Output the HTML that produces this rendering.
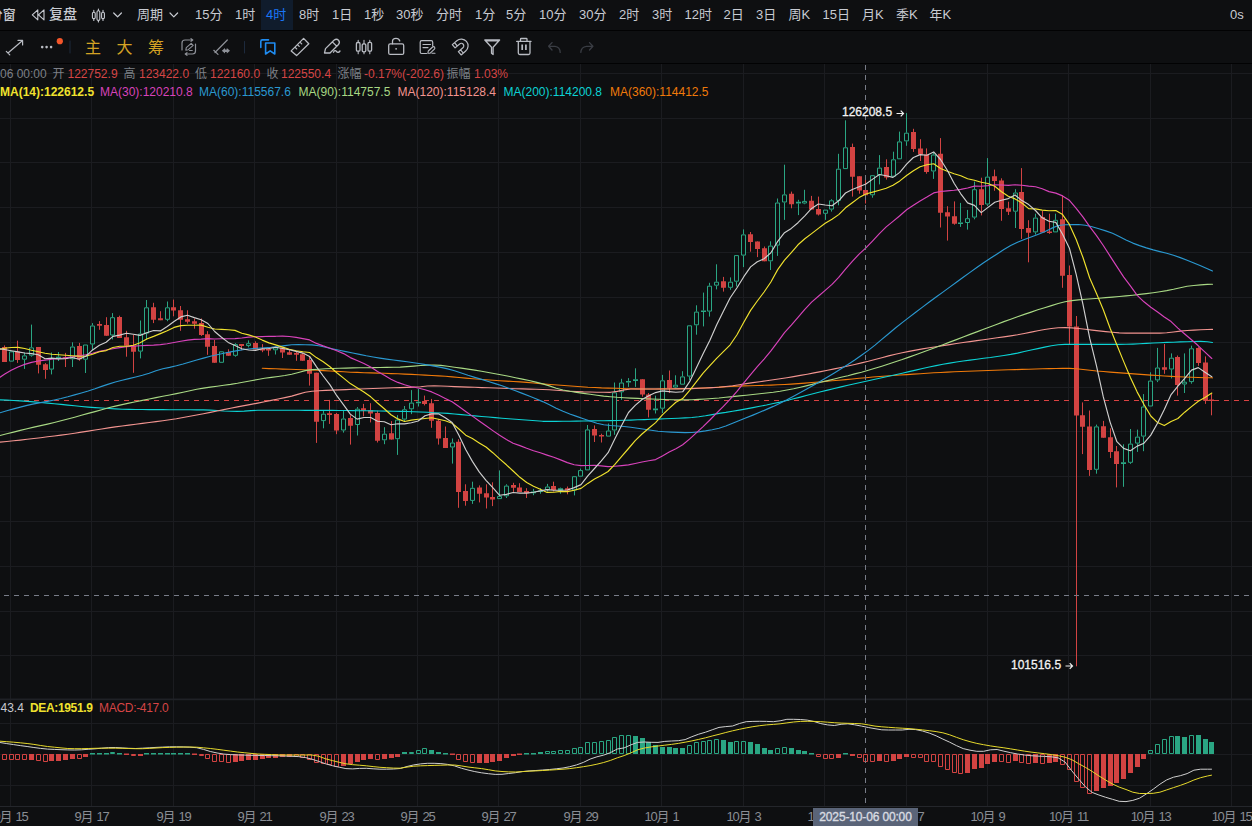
<!DOCTYPE html><html><head><meta charset="utf-8"><title>chart</title><style>
html,body{margin:0;padding:0;background:#0e0f11}
body{width:1252px;height:826px;overflow:hidden;position:relative;font-family:"Liberation Sans","Noto Sans CJK SC",sans-serif;color:#c8cbd2}
.t{position:absolute;white-space:nowrap;line-height:1}
.top{font-size:13px;top:7.5px;color:#c8cbd2}
.lg{font-size:12px;top:68px;color:#7d8087}
.lg b{font-weight:normal;color:#d64545}
.ma{font-size:12px;top:86px}
.ax{font-size:13px;top:810px;color:#8a8d94;transform:translateX(-50%);letter-spacing:-1.3px;word-spacing:2px}
.bar{position:absolute;left:0;width:1252px;background:#0e0f11}

</style></head><body>
<svg width="1252" height="826" viewBox="0 0 1252 826" style="position:absolute;left:0;top:0"><path d="M10.5 64V806 M91.5 64V806 M173.5 64V806 M254.5 64V806 M336.5 64V806 M417.5 64V806 M498.5 64V806 M580.5 64V806 M661.5 64V806 M743.5 64V806 M824.5 64V806 M906.5 64V806 M987.5 64V806 M1068.5 64V806 M1150.5 64V806 M1231.5 64V806 M0 73.5H1252 M0 118.5H1252 M0 162.5H1252 M0 207.5H1252 M0 252.5H1252 M0 297.5H1252 M0 342.5H1252 M0 387.5H1252 M0 431.5H1252 M0 476.5H1252 M0 521.5H1252 M0 566.5H1252 M0 611.5H1252 M0 655.5H1252 M0 723.5H1252 M0 754.5H1252 M0 785.5H1252" stroke="#1b1c20" stroke-width="1" fill="none"/><path d="M0 699.3H1252" stroke="#1f2126" stroke-width="1.7" fill="none"/><path d="M0 806.5H1252" stroke="#24262b" stroke-width="1"/><path d="M-6 400.5H1252" stroke="#d94242" stroke-width="1" stroke-dasharray="5 5" fill="none"/><path d="M24.5 352.5V355.4 M24.5 359.7V368.9 M31.5 324.6V347.4 M31.5 355.7V356.7 M51.5 352.5V358 M51.5 369.6V374.4 M58.5 352V356.7 M58.5 358.3V361 M72.5 342.3V346.5 M72.5 359.3V367 M85.5 359.7V373 M92.5 323.1V325.5 M92.5 344.5V350.3 M112.5 313.1V317.2 M112.5 335.5V339.4 M140.5 320.5V333.6 M140.5 351.6V358.4 M146.5 300V307.3 M146.5 333.6V339.4 M167.5 301.5V307.3 M167.5 319.8V321.2 M235.5 343.2V344.1 M235.5 355.8V356.7 M248.5 340.4V343.2 M248.5 346.1V347.4 M275.5 350.3V354.5 M323.5 410.2V413.7 M323.5 421.1V428.3 M343.5 410.8V418.5 M343.5 430.5V432.6 M357.5 407.1V408.7 M357.5 425V435.5 M384.5 427.2V433.7 M384.5 440.3V444.2 M397.5 415.2V419.6 M397.5 439.2V454.9 M404.5 406V409.3 M404.5 419.6V421.1 M411.5 390.1V402.6 M411.5 409.3V414.1 M418.5 389V401.7 M418.5 403.3V406.5 M452.5 438.5V442.5 M452.5 447.5V463.6 M472.5 481.7V487.8 M472.5 500.9V503.9 M499.5 470.4V495.9 M506.5 484.3V485.6 M506.5 496.3V498 M533.5 488.9V491.5 M533.5 493.2V495.2 M540.5 488.2V490.4 M540.5 492V493.7 M547.5 483.9V486.5 M547.5 490V491.5 M560.5 487.6V488.2 M560.5 490.4V493.7 M574.5 490.4V495.4 M580.5 468.6V470.1 M587.5 425V429.4 M608.5 423.5V430.5 M614.5 382.5V392.3 M614.5 430.5V434.8 M621.5 378.8V382.5 M621.5 392.3V399.9 M628.5 378.1V380.9 M628.5 382.5V386.9 M635.5 368.3V379.2 M635.5 381V386.9 M655.5 395.6V408.6 M655.5 410.2V413.5 M662.5 374.9V380.3 M662.5 408.7V413 M675.5 375.3V384.7 M675.5 387.5V388.4 M682.5 371.2V376.4 M689.5 376.6V380.1 M696.5 305.3V311.6 M696.5 325.3V334.7 M703.5 292.6V310.4 M703.5 312V326.4 M709.5 282.8V285.7 M709.5 311.6V316.6 M716.5 264.3V281.7 M716.5 285.7V289.4 M730.5 277.4V281.7 M730.5 287.8V289.8 M736.5 281.7V286.5 M743.5 229.4V234.4 M743.5 255.6V267.1 M770.5 241.3V245.6 M770.5 261.3V270 M777.5 198.5V202.5 M777.5 245.6V255.9 M784.5 164.7V194.4 M784.5 202.5V219.9 M798.5 199.8V201.8 M798.5 203.5V215.1 M804.5 189.8V200.9 M804.5 203.5V204.2 M825.5 213.8V219.9 M831.5 199.2V200.3 M831.5 209.6V211.6 M838.5 153.8V168.7 M838.5 200.9V205.3 M845.5 120.3V147.3 M872.5 195.3V197.7 M879.5 155.1V167.6 M879.5 175.2V184.4 M893.5 151.7V159.3 M899.5 131.6V141.4 M906.5 113.1V132.7 M906.5 141.4V145.8 M933.5 152.3V154.5 M933.5 171.5V178.9 M960.5 202.9V222.4 M960.5 224V226.9 M967.5 209.9V218.2 M967.5 223V229.6 M974.5 181.6V189.2 M974.5 217.6V219.3 M987.5 158.1V176.6 M987.5 204.5V206 M1015.5 189.2V192.5 M1015.5 211.7V228 M1035.5 213.7V217.6 M1035.5 232.4V234.6 M1055.5 213.7V219.8 M1096.5 424.6V426.4 M1096.5 469.8V473.7 M1123.5 444.3V462.3 M1123.5 463.9V486.8 M1130.5 429V443.6 M1130.5 462.8V463.9 M1137.5 429.6V436.6 M1137.5 443.6V451.9 M1143.5 394.1V406.5 M1143.5 436.6V451.2 M1150.5 372.3V380.6 M1157.5 347.9V367.5 M1157.5 380.4V382.1 M1171.5 353.4V357.7 M1171.5 369.5V378.4 M1184.5 353.4V381.7 M1184.5 384.5V393 M1191.5 345.7V348.3 M1191.5 382.1V383.7" stroke="#2aa683" stroke-width="1" fill="none"/><path d="M9.5 351.8H13.5V361.1H9.5Z M22.5 355.9H26.5V359.2H22.5Z M29.5 347.9H33.5V355.2H29.5Z M49.5 358.5H53.5V369.1H49.5Z M70.5 347H74.5V358.8H70.5Z M83.5 345H87.5V359.2H83.5Z M90.5 326H94.5V344H90.5Z M110.5 317.7H114.5V335H110.5Z M138.5 334.1H142.5V351.1H138.5Z M144.5 307.8H148.5V333.1H144.5Z M165.5 307.8H169.5V319.3H165.5Z M219.5 351.8H223.5V362.3H219.5Z M233.5 344.6H237.5V355.3H233.5Z M246.5 343.7H250.5V345.6H246.5Z M273.5 347.9H277.5V349.8H273.5Z M321.5 414.2H325.5V420.6H321.5Z M341.5 419H345.5V430H341.5Z M355.5 409.2H359.5V424.5H355.5Z M382.5 434.2H386.5V439.8H382.5Z M395.5 420.1H399.5V438.7H395.5Z M402.5 409.8H406.5V419.1H402.5Z M409.5 403.1H413.5V408.8H409.5Z M450.5 443H454.5V447H450.5Z M470.5 488.3H474.5V500.4H470.5Z M497.5 496.4H501.5V498.6H497.5Z M504.5 486.1H508.5V495.8H504.5Z M545.5 487H549.5V489.5H545.5Z M572.5 476.7H576.5V489.9H572.5Z M578.5 470.6H582.5V476.2H578.5Z M585.5 429.9H589.5V469.9H585.5Z M606.5 431H610.5V436.1H606.5Z M612.5 392.8H616.5V430H612.5Z M619.5 383H623.5V391.8H619.5Z M660.5 380.8H664.5V408.2H660.5Z M673.5 385.2H677.5V387H673.5Z M680.5 376.9H684.5V384.2H680.5Z M687.5 325.8H691.5V376.1H687.5Z M694.5 312.1H698.5V324.8H694.5Z M707.5 286.2H711.5V311.1H707.5Z M714.5 282.2H718.5V285.2H714.5Z M728.5 282.2H732.5V287.3H728.5Z M734.5 255.6H738.5V281.2H734.5Z M741.5 234.9H745.5V255.1H741.5Z M768.5 246.1H772.5V260.8H768.5Z M775.5 203H779.5V245.1H775.5Z M782.5 194.9H786.5V202H782.5Z M802.5 201.4H806.5V203H802.5Z M823.5 210.1H827.5V213.3H823.5Z M829.5 200.8H833.5V209.1H829.5Z M836.5 169.2H840.5V200.4H836.5Z M843.5 147.8H847.5V168.6H843.5Z M870.5 175.7H874.5V194.8H870.5Z M877.5 168.1H881.5V174.7H877.5Z M891.5 159.8H895.5V176.2H891.5Z M897.5 141.9H901.5V158.8H897.5Z M904.5 133.2H908.5V140.9H904.5Z M931.5 155H935.5V171H931.5Z M965.5 218.7H969.5V222.5H965.5Z M972.5 189.7H976.5V217.1H972.5Z M985.5 177.1H989.5V204H985.5Z M1013.5 193H1017.5V211.2H1013.5Z M1033.5 218.1H1037.5V231.9H1033.5Z M1053.5 220.3H1057.5V231.9H1053.5Z M1094.5 426.9H1098.5V469.3H1094.5Z M1128.5 444.1H1132.5V462.3H1128.5Z M1135.5 437.1H1139.5V443.1H1135.5Z M1141.5 407H1145.5V436.1H1141.5Z M1148.5 381.1H1152.5V406H1148.5Z M1155.5 368H1159.5V379.9H1155.5Z M1169.5 358.2H1173.5V369H1169.5Z M1182.5 382.2H1186.5V384H1182.5Z M1189.5 348.8H1193.5V381.6H1189.5Z" stroke="#2aa683" stroke-width="1" fill="#0e0f11"/><path d="M56 356.7H61V358.3H56Z M416 401.7H421V403.3H416Z M531 491.5H536V493.2H531Z M538 490.4H543V492H538Z M558 488.2H563V490.4H558Z M626 380.9H631V382.5H626Z M633 379.2H638V381H633Z M653 408.6H658V410.2H653Z M701 310.4H706V312H701Z M796 201.8H801V203.5H796Z M958 222.4H963V224H958Z M1121 462.3H1126V463.9H1121Z" fill="#2aa683"/><path d="M4.5 345.4V361.9 M17.5 340.7V362.9 M38.5 347.1V373.4 M45.5 363.1V378.8 M65.5 352.9V367 M79.5 342.9V360.8 M99.5 321.1V329.8 M106.5 317.2V335.8 M119.5 315.7V337.9 M126.5 330.8V356.7 M133.5 334.9V372.8 M153.5 302.8V323.1 M160.5 311.2V320.2 M173.5 299.6V316.3 M180.5 306V330.8 M187.5 310.3V323.6 M194.5 318.5V328.7 M201.5 318.5V335.9 M207.5 331.1V354.8 M214.5 340V362.8 M228.5 349.3V355.8 M241.5 344.1V350.3 M255.5 341.3V349.4 M262.5 344.1V352.2 M268.5 348.4V355.8 M282.5 347.4V358 M289.5 349.3V354.8 M296.5 351.6V360.8 M302.5 352.9V360.8 M309.5 356.7V385.6 M316.5 372.7V442.9 M329.5 399.9V423.9 M336.5 413V434.2 M350.5 415.2V444.6 M363.5 403.9V416.3 M370.5 403.2V422.4 M377.5 410.8V442.5 M391.5 421.1V439.6 M424.5 395.6V405.4 M431.5 398.9V427.8 M438.5 418.9V444.6 M445.5 426.5V447.9 M458.5 439.2V507.8 M465.5 484.3V505.7 M479.5 485.4V502.4 M486.5 484.3V508.5 M492.5 482.3V506.1 M513.5 482.8V491.9 M519.5 483.2V491.9 M526.5 488.2V498 M553.5 481.7V491.5 M567.5 486.5V494.3 M594.5 425.4V442 M601.5 433.7V442.5 M642.5 379.2V396.7 M648.5 393V417.4 M669.5 370.5V393 M723.5 276.9V291.6 M750.5 232V251.7 M757.5 241.4V257.1 M764.5 246.5V261.3 M791.5 191.6V208.3 M811.5 195.9V209.6 M818.5 196.6V215.5 M852.5 143.6V196.6 M859.5 176.3V193.7 M865.5 175.2V203.5 M886.5 159.3V179.6 M913.5 128.8V151.9 M920.5 139.2V161 M926.5 148.4V173.7 M940.5 138.1V227.5 M947.5 206.2V240.6 M954.5 201.4V224.7 M981.5 177.7V215.4 M994.5 169.6V190.8 M1001.5 178.3V220.8 M1008.5 201.7V215 M1021.5 168.1V238.9 M1028.5 220.2V262.3 M1042.5 211V232.4 M1049.5 213.7V233.9 M1062.5 195.8V287.8 M1069.5 265.5V344 M1076.5 316V666.3 M1082.5 402.4V454.1 M1089.5 410.5V475.9 M1103.5 420.9V437.7 M1110.5 428.3V458 M1116.5 446V487.4 M1164.5 344V373.8 M1177.5 355.5V395.6 M1198.5 347.2V365.8 M1205.5 356.4V403.9 M1211.5 393.5V415.3" stroke="#d24342" stroke-width="1" fill="none"/><path d="M2 347.1H7V361.9H2Z M15 351.6H20V359.9H15Z M36 347.1H41V364.8H36Z M43 364.2H48V369.9H43Z M63 357.2H68V358.8H63Z M77 346.1H82V359.3H77Z M97 324H102V325.7H97Z M104 325H109V335.8H104Z M117 316.9H122V337.9H117Z M124 337.2H129V345.8H124Z M131 345.8H136V351.8H131Z M151 307.3H156V319.8H151Z M158 318.2H163V320.2H158Z M171 307.3H176V310.5H171Z M178 310.3H183V319.8H178Z M185 319.3H190V321.8H185Z M192 321.2H197V323.7H192Z M199 323.1H204V334.9H199Z M205 334.3H210V346.7H205Z M212 346.1H217V362.8H212Z M226 352H231V355.8H226Z M239 344.1H244V346.1H239Z M253 343H258V349.4H253Z M260 349H265V350.6H260Z M266 349H271V350.6H266Z M280 347.4H285V352.6H280Z M287 352.2H292V354.8H287Z M294 352.9H299V354.8H294Z M300 354.2H305V360.8H300Z M307 359.9H312V373.8H307Z M314 372.7H319V421.7H314Z M327 413.3H332V414.9H327Z M334 414.1H339V430.5H334Z M348 418H353V425.7H348Z M361 408.2H366V410.8H361Z M368 410.2H373V413.5H368Z M375 413H380V440.7H375Z M389 433.3H394V439.6H389Z M422 401H427V403.9H422Z M429 403.2H434V420.7H429Z M436 420.7H441V438.5H436Z M443 438.1H448V447.9H443Z M456 441.8H461V491.9H456Z M463 491.1H468V500.9H463Z M477 487.6H482V493.7H477Z M484 493.2H489V497.4H484Z M490 496.9H495V499.6H490Z M511 485H516V487.8H511Z M517 487.4H522V491.9H517Z M524 491.1H529V493.2H524Z M551 486H556V490H551Z M565 488.2H570V490.4H565Z M592 428.9H597V435.5H592Z M599 435H604V436.6H599Z M640 379.2H645V394.5H640Z M646 394.5H651V409.8H646Z M667 379.9H672V388H667Z M721 281.3H726V287.8H721Z M748 234.2H753V241.9H748Z M755 241.4H760V249H755Z M762 248.2H767V261.3H762Z M789 193.7H794V204.2H789Z M809 200.7H814V209.6H809Z M816 209H821V214.4H816Z M850 146.9H855V176.7H850Z M857 176.3H862V190.5H857Z M863 190H868V195.3H863Z M884 167.1H889V177.4H884Z M911 132H916V149H911Z M918 148.4H923V154.5H918Z M924 154.5H929V171.9H924Z M938 153.8H943V212.7H938Z M945 212.3H950V216.6H945Z M952 216.2H957V223.8H952Z M979 189.2H984V204.9H979Z M992 176.2H997V181H992Z M999 180.5H1004V208.9H999Z M1006 208.2H1011V211.7H1006Z M1019 192.1H1024V228.9H1019Z M1026 228H1031V232.8H1026Z M1040 217.1H1045V232.4H1040Z M1047 231.5H1052V233.1H1047Z M1060 219.3H1065V275.8H1060Z M1067 274.9H1072V326.5H1067Z M1074 326.5H1079V415.5H1074Z M1080 415.3H1085V426.8H1080Z M1087 426.4H1092V470H1087Z M1101 426.2H1106V437.7H1101Z M1108 437.3H1113V451.9H1108Z M1114 451.2H1119V463.9H1114Z M1162 367.3H1167V369.7H1162Z M1175 357.1H1180V385H1175Z M1196 347.9H1201V362.9H1196Z M1203 362.5H1208V400.7H1203Z M1209 399.5H1214V401.1H1209Z" fill="#d24342"/><path d="M262.3 368.3 L269.1 368.6 L275.9 368.8 L282.6 369.1 L289.4 369.3 L296.2 369.5 L303 369.8 L309.8 370 L316.6 370.3 L323.3 370.6 L330.1 371 L336.9 371.4 L343.7 371.8 L350.5 372.2 L357.3 372.4 L364 372.7 L370.8 372.9 L377.6 373.1 L384.4 373.3 L391.2 373.6 L398 373.8 L404.7 374.1 L411.5 374.4 L418.3 374.7 L425.1 375.1 L431.9 375.5 L438.7 375.9 L445.4 376.3 L452.2 376.9 L459 377.5 L465.8 378.1 L472.6 378.7 L479.4 379.3 L486.1 379.8 L492.9 380.3 L499.7 380.7 L506.5 381.1 L513.3 381.5 L520.1 381.9 L526.8 382.4 L533.6 383 L540.4 383.6 L547.2 384.2 L554 384.8 L560.8 385.3 L567.5 385.8 L574.3 386.3 L581.1 386.7 L587.9 387.2 L594.7 387.5 L601.5 387.9 L608.2 388.1 L615 388.3 L621.8 388.5 L628.6 388.7 L635.4 388.9 L642.2 389 L648.9 389 L655.7 389 L662.5 388.9 L669.3 388.8 L676.1 388.7 L682.9 388.6 L689.6 388.5 L696.4 388.3 L703.2 388 L710 387.7 L716.8 387.3 L723.6 386.9 L730.3 386.5 L737.1 386.2 L743.9 385.9 L750.7 385.7 L757.5 385.5 L764.3 385.3 L771 385.1 L777.8 384.8 L784.6 384.5 L791.4 384.1 L798.2 383.6 L805 383.1 L811.7 382.5 L818.5 382 L825.3 381.4 L832.1 380.8 L838.9 380.2 L845.7 379.6 L852.4 379 L859.2 378.3 L866 377.7 L872.8 377 L879.6 376.5 L886.4 376 L893.1 375.5 L899.9 375 L906.7 374.6 L913.5 374.1 L920.3 373.7 L927.1 373.2 L933.8 372.8 L940.6 372.5 L947.4 372.1 L954.2 371.8 L961 371.5 L967.8 371.2 L974.5 371 L981.3 370.7 L988.1 370.5 L994.9 370.2 L1001.7 370 L1008.5 369.8 L1015.2 369.6 L1022 369.4 L1028.8 369.2 L1035.6 369 L1042.4 368.8 L1049.2 368.6 L1055.9 368.5 L1062.7 368.4 L1069.5 368.4 L1076.3 368.8 L1083.1 369.5 L1089.9 370.3 L1096.6 371 L1103.4 371.5 L1110.2 372.1 L1117 372.6 L1123.8 373.1 L1130.6 373.6 L1137.3 374.1 L1144.1 374.6 L1150.9 375.1 L1157.7 375.5 L1164.5 376 L1171.3 376.4 L1178 376.7 L1184.8 377 L1191.6 377.3 L1198.4 377.5 L1205.2 377.7 L1212 377.8 L1212.5 377.8" stroke="#f07a0a" stroke-width="1.15" fill="none" stroke-linejoin="round" stroke-linecap="round"/><path d="M0 399.8 L6.8 400.1 L13.6 400.5 L20.3 400.9 L27.1 401.4 L33.9 401.9 L40.7 402.5 L47.5 403.1 L54.3 403.7 L61 404.4 L67.8 405.1 L74.6 405.8 L81.4 406.5 L88.2 407.1 L95 407.6 L101.7 408 L108.5 408.5 L115.3 408.9 L122.1 409.2 L128.9 409.4 L135.7 409.5 L142.4 409.5 L149.2 409.6 L156 409.6 L162.8 409.6 L169.6 409.7 L176.4 409.7 L183.1 409.7 L189.9 409.8 L196.7 409.8 L203.5 409.9 L210.3 410.1 L217.1 410.5 L223.8 411 L230.6 411.3 L237.4 411.4 L244.2 411.1 L251 410.6 L257.8 410.3 L264.5 410.2 L271.3 410.2 L278.1 410.2 L284.9 410.2 L291.7 410.2 L298.5 410.3 L305.2 410.3 L312 410.3 L318.8 410.3 L325.6 410.4 L332.4 410.4 L339.2 410.5 L345.9 410.5 L352.7 410.6 L359.5 410.7 L366.3 410.8 L373.1 410.9 L379.9 411 L386.6 411.1 L393.4 411.2 L400.2 411.4 L407 411.5 L413.8 411.8 L420.6 412 L427.3 412.3 L434.1 412.7 L440.9 413 L447.7 413.4 L454.5 414 L461.3 414.6 L468 415.2 L474.8 415.9 L481.6 416.5 L488.4 417 L495.2 417.6 L502 418.2 L508.7 418.7 L515.5 419.3 L522.3 419.8 L529.1 420.3 L535.9 420.8 L542.7 421.3 L549.4 421.3 L556.2 421.3 L563 421.2 L569.8 421.2 L576.6 421.1 L583.4 421 L590.1 420.9 L596.9 420.8 L603.7 420.7 L610.5 420.6 L617.3 420.5 L624.1 420.3 L630.8 420.1 L637.6 419.8 L644.4 419.6 L651.2 419.3 L658 419.1 L664.8 418.8 L671.5 418.5 L678.3 418.2 L685.1 417.9 L691.9 417.5 L698.7 416.8 L705.5 415.8 L712.2 414.6 L719 413.4 L725.8 412.4 L732.6 411.2 L739.4 410.1 L746.2 408.9 L752.9 407.6 L759.7 406.3 L766.5 405 L773.3 403.5 L780.1 402.1 L786.9 400.5 L793.6 398.8 L800.4 397.1 L807.2 395.3 L814 393.5 L820.8 391.8 L827.6 390.1 L834.3 388.5 L841.1 386.9 L847.9 385.3 L854.7 383.8 L861.5 382.2 L868.3 380.7 L875 379.2 L881.8 377.7 L888.6 376.2 L895.4 374.7 L902.2 373.2 L909 371.6 L915.7 370.1 L922.5 368.5 L929.3 367 L936.1 365.6 L942.9 364.3 L949.7 363.1 L956.4 362 L963.2 361 L970 360.1 L976.8 359.2 L983.6 358.3 L990.4 357.5 L997.1 356.5 L1003.9 355.5 L1010.7 354.4 L1017.5 353.1 L1024.3 351.5 L1031.1 350 L1037.8 348.6 L1044.6 347.1 L1051.4 345.7 L1058.2 344.7 L1065 344.4 L1071.8 344.4 L1078.5 344.4 L1085.3 344.4 L1092.1 344.4 L1098.9 344.4 L1105.7 344.4 L1112.5 344.4 L1119.2 344.4 L1126 344.3 L1132.8 344.1 L1139.6 343.8 L1146.4 343.4 L1153.2 343 L1159.9 342.7 L1166.7 342.4 L1173.5 342.2 L1180.3 341.9 L1187.1 341.7 L1193.9 341.5 L1200.6 341.4 L1207.4 341.7 L1212.5 342.5" stroke="#0cd2d4" stroke-width="1.15" fill="none" stroke-linejoin="round" stroke-linecap="round"/><path d="M0 442.2 L6.8 441.5 L13.6 440.8 L20.3 440.1 L27.1 439.3 L33.9 438.5 L40.7 437.7 L47.5 436.8 L54.3 436 L61 435.1 L67.8 434.2 L74.6 433.2 L81.4 432.1 L88.2 431.1 L95 430 L101.7 429 L108.5 427.9 L115.3 426.9 L122.1 426 L128.9 425.1 L135.7 424.2 L142.4 423.4 L149.2 422.5 L156 421.6 L162.8 420.7 L169.6 419.7 L176.4 418.7 L183.1 417.5 L189.9 416.3 L196.7 415 L203.5 413.7 L210.3 412.4 L217.1 411 L223.8 409.6 L230.6 408.3 L237.4 406.9 L244.2 405.6 L251 404.4 L257.8 403.1 L264.5 401.7 L271.3 400.4 L278.1 399 L284.9 397.6 L291.7 396.1 L298.5 394.1 L305.2 392.3 L312 391.3 L318.8 390.8 L325.6 390.4 L332.4 390.1 L339.2 389.9 L345.9 389.6 L352.7 389.3 L359.5 389 L366.3 388.7 L373.1 388.5 L379.9 388.2 L386.6 388 L393.4 387.8 L400.2 387.6 L407 387.4 L413.8 387.1 L420.6 386.7 L427.3 386 L434.1 385.8 L440.9 386 L447.7 386.2 L454.5 386.6 L461.3 386.9 L468 387.1 L474.8 387.3 L481.6 387.6 L488.4 387.8 L495.2 388 L502 388.3 L508.7 388.5 L515.5 388.7 L522.3 388.9 L529.1 389.1 L535.9 389.3 L542.7 389.5 L549.4 389.8 L556.2 390.2 L563 390.7 L569.8 391.2 L576.6 391.6 L583.4 391.9 L590.1 392 L596.9 392.2 L603.7 392.3 L610.5 392.3 L617.3 391.4 L624.1 389.9 L630.8 389 L637.6 389 L644.4 389 L651.2 389 L658 389 L664.8 389 L671.5 389 L678.3 388.9 L685.1 388.8 L691.9 388.6 L698.7 388.3 L705.5 388 L712.2 387.6 L719 387.2 L725.8 386.5 L732.6 385.7 L739.4 384.7 L746.2 383.6 L752.9 382.6 L759.7 381.7 L766.5 380.7 L773.3 379.8 L780.1 378.8 L786.9 377.7 L793.6 376.6 L800.4 375.4 L807.2 374.2 L814 372.9 L820.8 371.6 L827.6 370.3 L834.3 368.9 L841.1 367.5 L847.9 366 L854.7 364.5 L861.5 362.9 L868.3 361.3 L875 359.5 L881.8 357.7 L888.6 355.9 L895.4 354.2 L902.2 352.8 L909 351.4 L915.7 350.1 L922.5 348.9 L929.3 347.8 L936.1 346.7 L942.9 345.6 L949.7 344.6 L956.4 343.5 L963.2 342.5 L970 341.6 L976.8 340.6 L983.6 339.7 L990.4 338.8 L997.1 337.8 L1003.9 336.9 L1010.7 335.9 L1017.5 334.8 L1024.3 333.5 L1031.1 332.1 L1037.8 330.7 L1044.6 329.5 L1051.4 328.5 L1058.2 327.8 L1065 327.6 L1071.8 327.9 L1078.5 328.5 L1085.3 329.3 L1092.1 330.1 L1098.9 330.9 L1105.7 331.6 L1112.5 332.3 L1119.2 332.9 L1126 333.1 L1132.8 333.1 L1139.6 333.1 L1146.4 333.1 L1153.2 333.1 L1159.9 333.1 L1166.7 332.8 L1173.5 332 L1180.3 331.1 L1187.1 330.5 L1193.9 330.1 L1200.6 329.7 L1207.4 329.5 L1212.5 329.4" stroke="#f29490" stroke-width="1.15" fill="none" stroke-linejoin="round" stroke-linecap="round"/><path d="M0 435.5 L6.8 433.8 L13.6 432.1 L20.3 430.4 L27.1 428.7 L33.9 427.1 L40.7 425.6 L47.5 424.1 L54.3 422.5 L61 420.8 L67.8 419 L74.6 417.2 L81.4 415.3 L88.2 413.4 L95 411.6 L101.7 409.7 L108.5 407.8 L115.3 406.1 L122.1 404.6 L128.9 403.1 L135.7 401.7 L142.4 400.4 L149.2 399 L156 397.6 L162.8 396.3 L169.6 395 L176.4 393.6 L183.1 392.2 L189.9 390.7 L196.7 389.3 L203.5 388.1 L210.3 387.1 L217.1 386.2 L223.8 385.3 L230.6 384.4 L237.4 383.3 L244.2 382 L251 380.7 L257.8 379.5 L264.5 378.3 L271.3 377.4 L278.1 376.5 L284.9 375.5 L291.7 374.3 L298.5 372.5 L305.2 370.6 L312 369.6 L318.8 369.2 L325.6 368.8 L332.4 368.5 L339.2 368.3 L345.9 368.1 L352.7 367.9 L359.5 367.8 L366.3 367.7 L373.1 367.6 L379.9 367.5 L386.6 367.4 L393.4 367.3 L400.2 367.1 L407 366.6 L413.8 366.1 L420.6 365.5 L427.3 365.1 L434.1 365 L440.9 365.4 L447.7 366.2 L454.5 367.2 L461.3 368.1 L468 369.1 L474.8 370.1 L481.6 371.3 L488.4 372.5 L495.2 373.8 L502 375 L508.7 376.3 L515.5 377.7 L522.3 379.1 L529.1 380.5 L535.9 382.1 L542.7 383.9 L549.4 385.9 L556.2 388.2 L563 390 L569.8 391.3 L576.6 392.4 L583.4 393.4 L590.1 394.3 L596.9 395.2 L603.7 396.1 L610.5 396.7 L617.3 397.3 L624.1 397.7 L630.8 398.1 L637.6 398.4 L644.4 398.7 L651.2 399 L658 399.3 L664.8 399.5 L671.5 399.8 L678.3 399.9 L685.1 399.9 L691.9 399.7 L698.7 399.4 L705.5 399 L712.2 398.5 L719 398 L725.8 397.3 L732.6 396.6 L739.4 395.9 L746.2 395.2 L752.9 394.5 L759.7 393.8 L766.5 393 L773.3 392.2 L780.1 391.2 L786.9 390 L793.6 388.7 L800.4 387.2 L807.2 385.6 L814 383.9 L820.8 382.2 L827.6 380.6 L834.3 379 L841.1 377.3 L847.9 375.7 L854.7 373.9 L861.5 372.2 L868.3 370.3 L875 368.3 L881.8 366.2 L888.6 364 L895.4 361.7 L902.2 359.5 L909 357.1 L915.7 354.7 L922.5 352.3 L929.3 349.8 L936.1 347.3 L942.9 344.7 L949.7 342.1 L956.4 339.6 L963.2 337 L970 334.4 L976.8 331.9 L983.6 329.3 L990.4 326.8 L997.1 324.2 L1003.9 321.6 L1010.7 319.2 L1017.5 316.7 L1024.3 314.4 L1031.1 312.1 L1037.8 309.8 L1044.6 307.7 L1051.4 305.6 L1058.2 303.5 L1065 301.7 L1071.8 300.6 L1078.5 299.9 L1085.3 299.3 L1092.1 298.8 L1098.9 298.3 L1105.7 297.6 L1112.5 297.1 L1119.2 296.5 L1126 295.9 L1132.8 295.2 L1139.6 294.4 L1146.4 293.6 L1153.2 292.7 L1159.9 291.7 L1166.7 290.6 L1173.5 289.3 L1180.3 287.7 L1187.1 286.3 L1193.9 285.5 L1200.6 284.9 L1207.4 284.4 L1212.5 284.3" stroke="#a8d884" stroke-width="1.15" fill="none" stroke-linejoin="round" stroke-linecap="round"/><path d="M0 412.8 L6.8 410.8 L13.6 408.9 L20.3 407.1 L27.1 405.4 L33.9 403.9 L40.7 402.6 L47.5 401.4 L54.3 400 L61 398.5 L67.8 396.8 L74.6 394.9 L81.4 393 L88.2 391 L95 388.8 L101.7 386.4 L108.5 384.1 L115.3 382 L122.1 380.2 L128.9 378.6 L135.7 377 L142.4 375.3 L149.2 373.2 L156 370.7 L162.8 368.8 L169.6 367.4 L176.4 365.8 L183.1 364 L189.9 362 L196.7 360 L203.5 358.1 L210.3 356.3 L217.1 354.8 L223.8 353.3 L230.6 351.9 L237.4 350.6 L244.2 349.5 L251 348.8 L257.8 348.2 L264.5 347.7 L271.3 347.3 L278.1 346.6 L284.9 345.6 L291.7 344.8 L298.5 344.6 L305.2 344.7 L312 344.9 L318.8 345.8 L325.6 347.3 L332.4 348.9 L339.2 350.3 L345.9 351.6 L352.7 353 L359.5 354.4 L366.3 355.8 L373.1 357 L379.9 358.1 L386.6 359.1 L393.4 360 L400.2 360.9 L407 361.8 L413.8 362.7 L420.6 363.8 L427.3 364.9 L434.1 366.1 L440.9 367.4 L447.7 368.9 L454.5 370.8 L461.3 373 L468 375.3 L474.8 377.4 L481.6 379.4 L488.4 381.5 L495.2 383.6 L502 385.8 L508.7 388.3 L515.5 390.8 L522.3 393.4 L529.1 396 L535.9 398.7 L542.7 401.6 L549.4 404.7 L556.2 408.2 L563 411.3 L569.8 414 L576.6 416.4 L583.4 418.7 L590.1 421 L596.9 423.2 L603.7 424.8 L610.5 425.5 L617.3 426 L624.1 426.5 L630.8 427.2 L637.6 428.2 L644.4 429.3 L651.2 430.3 L658 431.2 L664.8 431.7 L671.5 432.1 L678.3 432.4 L685.1 432.6 L691.9 432.5 L698.7 431.9 L705.5 430.9 L712.2 429.7 L719 428.2 L725.8 426 L732.6 423.2 L739.4 420.5 L746.2 417.8 L752.9 415.1 L759.7 412.3 L766.5 409.4 L773.3 406.4 L780.1 403.2 L786.9 399.8 L793.6 396.2 L800.4 392.6 L807.2 388.8 L814 384.9 L820.8 381 L827.6 376.9 L834.3 372.9 L841.1 368.7 L847.9 364.4 L854.7 360 L861.5 355.3 L868.3 350.4 L875 345.1 L881.8 339.4 L888.6 333.7 L895.4 328 L902.2 322.6 L909 317.4 L915.7 312.2 L922.5 307.1 L929.3 302 L936.1 297 L942.9 292.1 L949.7 287.1 L956.4 282.2 L963.2 277.3 L970 272.4 L976.8 267.5 L983.6 262.8 L990.4 258.3 L997.1 253.9 L1003.9 249.5 L1010.7 245.6 L1017.5 242.3 L1024.3 239.5 L1031.1 237 L1037.8 234.5 L1044.6 231.8 L1051.4 228.4 L1058.2 225.5 L1065 224.7 L1071.8 224.6 L1078.5 224.5 L1085.3 225.2 L1092.1 226.7 L1098.9 228.7 L1105.7 230.9 L1112.5 233.3 L1119.2 236.4 L1126 239.9 L1132.8 243.1 L1139.6 245.6 L1146.4 247.9 L1153.2 249.9 L1159.9 251.6 L1166.7 253.3 L1173.5 255.3 L1180.3 257.6 L1187.1 260.2 L1193.9 263 L1200.6 265.8 L1207.4 268.7 L1212.5 271" stroke="#2a98d0" stroke-width="1.15" fill="none" stroke-linejoin="round" stroke-linecap="round"/><path d="M0 377.3 L4.4 374.3 L11.2 370.3 L18 367 L24.7 364.4 L31.5 362.4 L38.3 361 L45.1 360.1 L51.9 359.3 L58.7 358.7 L65.4 357.8 L72.2 356.9 L79 355.9 L85.8 354.7 L92.6 353.2 L99.4 351.4 L106.1 350 L112.9 348.7 L119.7 347.6 L126.5 346.7 L133.3 346.1 L140.1 345.7 L146.8 345.4 L153.6 345.1 L160.4 344.6 L167.2 343.7 L174 342.5 L180.8 341.2 L187.5 340.1 L194.3 339.4 L201.1 339.1 L207.9 338.6 L214.7 339 L221.5 338.7 L228.2 338.7 L235 338.6 L241.8 338 L248.6 337.1 L255.4 336.8 L262.2 336.6 L268.9 336.3 L275.7 336.3 L282.5 336.1 L289.3 336.5 L296.1 337.4 L302.9 338.6 L309.6 339.9 L316.4 343.4 L323.2 345.9 L330 348.2 L336.8 350.8 L343.6 353.6 L350.3 357.6 L357.1 360.5 L363.9 363.6 L370.7 367.1 L377.5 371.4 L384.3 375.2 L391 379.2 L397.8 382.4 L404.6 384.8 L411.4 386.7 L418.2 388 L425 389.8 L431.7 391.9 L438.5 395.1 L445.3 398.5 L452.1 401.8 L458.9 406.5 L465.7 411.5 L472.4 416.1 L479.2 421 L486 425.8 L492.8 430.6 L499.6 435.3 L506.4 439.5 L513.1 443.3 L519.9 445.6 L526.7 448.3 L533.5 450.8 L540.3 452.8 L547.1 455.1 L553.8 457.3 L560.6 459.9 L567.4 462.6 L574.2 464.7 L581 465.6 L587.8 465.5 L594.5 465.3 L601.3 465.9 L608.1 466.6 L614.9 466.3 L621.7 465.6 L628.5 464.9 L635.2 463.5 L642 462 L648.8 460.8 L655.6 459.6 L662.4 455.9 L669.2 452.1 L675.9 448.7 L682.7 444.8 L689.5 439.1 L696.3 432.8 L703.1 426.6 L709.9 420 L716.6 413.1 L723.4 406.3 L730.2 399.2 L737 391.4 L743.8 382.8 L750.6 374.7 L757.3 366.6 L764.1 359.1 L770.9 350.9 L777.7 341.8 L784.5 332.6 L791.3 325.1 L798 317.3 L804.8 309.4 L811.6 302.1 L818.4 296.2 L825.2 290.4 L832 284.4 L838.7 277.4 L845.5 269.1 L852.3 261.3 L859.1 254.1 L865.9 247.9 L872.7 240.8 L879.4 233.6 L886.2 226.9 L893 221.4 L899.8 215.7 L906.6 209.8 L913.4 205.3 L920.1 201 L926.9 197.1 L933.7 192.9 L940.5 191.5 L947.3 190.9 L954.1 190.3 L960.8 189.4 L967.6 188 L974.4 186.1 L981.2 186.2 L988 185.6 L994.8 184.8 L1001.5 185 L1008.3 185.4 L1015.1 184.8 L1021.9 185.3 L1028.7 186.1 L1035.5 186.7 L1042.2 188.8 L1049 191.6 L1055.8 193.1 L1062.6 195.9 L1069.4 200.3 L1076.2 208.3 L1082.9 216.9 L1089.7 226.7 L1096.5 235.6 L1103.3 245.5 L1110.1 256.1 L1116.9 266.6 L1123.6 276.9 L1130.4 285.9 L1137.2 295.3 L1144 301.8 L1150.8 307.3 L1157.6 312 L1164.3 317 L1171.1 321.6 L1177.9 328.1 L1184.7 334 L1191.5 339.7 L1198.3 345.8 L1205 352.2 L1211.8 358.5" stroke="#d843bb" stroke-width="1.15" fill="none" stroke-linejoin="round" stroke-linecap="round"/><path d="M0 349.3 L4.4 348.3 L11.2 347.5 L18 347.4 L24.7 348.5 L31.5 350.3 L38.3 351.8 L45.1 353.2 L51.9 354.2 L58.7 354.8 L65.4 355.3 L72.2 355.7 L79 356.1 L85.8 356.3 L92.6 354.3 L99.4 351.7 L106.1 350.6 L112.9 347.5 L119.7 346.3 L126.5 346.2 L133.3 345.3 L140.1 342.7 L146.8 339 L153.6 336.4 L160.4 333.6 L167.2 330.8 L174 327.4 L180.8 325.6 L187.5 325.3 L194.3 325.2 L201.1 325.1 L207.9 327.2 L214.7 329 L221.5 329.4 L228.2 329.7 L235 330.4 L241.8 333.2 L248.6 334.9 L255.4 337 L262.2 340.1 L268.9 342.9 L275.7 344.9 L282.5 347.1 L289.3 349.3 L296.1 350.7 L302.9 351.7 L309.6 352.5 L316.4 357.6 L323.2 361.7 L330 366.7 L336.8 372.8 L343.6 378.1 L350.3 383.6 L357.1 387.7 L363.9 392 L370.7 396.8 L377.5 403 L384.3 408.7 L391 414.7 L397.8 418.9 L404.6 421.5 L411.4 420.1 L418.2 419.3 L425 418.5 L431.7 417.8 L438.5 419.2 L445.3 420.8 L452.1 423.2 L458.9 429 L465.7 435.2 L472.4 438.6 L479.2 442.9 L486 447 L492.8 452.7 L499.6 458.9 L506.4 464.8 L513.1 471 L519.9 477.3 L526.7 482.5 L533.5 486.3 L540.3 489.3 L547.1 492.4 L553.8 492.3 L560.6 491.4 L567.4 491.6 L574.2 490.3 L581 488.4 L587.8 483.4 L594.5 479.1 L601.3 475.6 L608.1 471.5 L614.9 464.3 L621.7 456.4 L628.5 448.5 L635.2 440.6 L642 434 L648.8 428.3 L655.6 422.6 L662.4 414.8 L669.2 408.4 L675.9 402.3 L682.7 398.6 L689.5 390.7 L696.3 381.8 L703.1 373.2 L709.9 365.6 L716.6 358.4 L723.4 351.7 L730.2 344.8 L737 334.8 L743.8 322.3 L750.6 310.4 L757.3 301 L764.1 292 L770.9 282 L777.7 269.6 L784.5 260.2 L791.3 252.6 L798 244.8 L804.8 238.8 L811.6 233.6 L818.4 228.4 L825.2 223.2 L832 219.3 L838.7 214.6 L845.5 207.8 L852.3 202.7 L859.1 197.6 L865.9 194 L872.7 192.1 L879.4 190.2 L886.2 188.2 L893 185.2 L899.8 180.9 L906.6 175.5 L913.4 170.8 L920.1 166.8 L926.9 164.8 L933.7 163.8 L940.5 168.5 L947.3 171.3 L954.1 173.7 L960.8 175.7 L967.6 178.7 L974.4 180.3 L981.2 182.2 L988 183.5 L994.8 186.3 L1001.5 191.7 L1008.3 196.2 L1015.1 198.9 L1021.9 203 L1028.7 208.6 L1035.5 208.9 L1042.2 210.1 L1049 210.7 L1055.8 210.5 L1062.6 214.6 L1069.4 224.4 L1076.2 239.5 L1082.9 257.3 L1089.7 278 L1096.5 293.5 L1103.3 309.7 L1110.1 328.2 L1116.9 345 L1123.6 361.4 L1130.4 377.5 L1137.2 392.1 L1144 404.5 L1150.8 416 L1157.6 422.6 L1164.3 425.6 L1171.1 421.5 L1177.9 418.5 L1184.7 412.2 L1191.5 406.6 L1198.3 401.3 L1205 397.6 L1211.8 393.1" stroke="#f0e22e" stroke-width="1.15" fill="none" stroke-linejoin="round" stroke-linecap="round"/><path d="M0 348.8 L4.4 349.5 L11.2 350.7 L18 351.9 L24.7 353 L31.5 353.6 L38.3 354.8 L45.1 358.7 L51.9 358.1 L58.7 358.9 L65.4 358.7 L72.2 357.5 L79 359.2 L85.8 356.3 L92.6 349.9 L99.4 345.3 L106.1 342.3 L112.9 336.4 L119.7 335.1 L126.5 333.2 L133.3 334.2 L140.1 335.4 L146.8 332.8 L153.6 330.5 L160.4 330.9 L167.2 326.5 L174 321.5 L180.8 316.9 L187.5 315.2 L194.3 317.6 L201.1 319.7 L207.9 323.5 L214.7 331.5 L221.5 337.3 L228.2 342.4 L235 345.6 L241.8 348.8 L248.6 350 L255.4 350.4 L262.2 348.7 L268.9 348.5 L275.7 347.3 L282.5 348.5 L289.3 349.8 L296.1 351.4 L302.9 353.1 L309.6 356.4 L316.4 366.6 L323.2 376 L330 384.9 L336.8 395.7 L343.6 404.8 L350.3 414.1 L357.1 419.1 L363.9 417.5 L370.7 417.5 L377.5 421.2 L384.3 421.7 L391 424.7 L397.8 423.8 L404.6 423.9 L411.4 422.7 L418.2 421 L425 415.8 L431.7 413.9 L438.5 413.7 L445.3 417.8 L452.1 422.5 L458.9 435.3 L465.7 449.5 L472.4 461.4 L479.2 471.9 L486 480.3 L492.8 487.7 L499.6 495.3 L506.4 494.4 L513.1 492.5 L519.9 493.1 L526.7 493.1 L533.5 492.2 L540.3 490.9 L547.1 489.6 L553.8 490.2 L560.6 490.3 L567.4 490 L574.2 487.6 L581 484.6 L587.8 475.8 L594.5 468.5 L601.3 460.9 L608.1 452.7 L614.9 438.7 L621.7 425.3 L628.5 412.5 L635.2 405.4 L642 399.5 L648.8 395.7 L655.6 392.6 L662.4 390.9 L669.2 391.6 L675.9 392.2 L682.7 391.8 L689.5 381.9 L696.3 367.9 L703.1 353.8 L709.9 340.3 L716.6 325.1 L723.4 311.3 L730.2 297.8 L737 287.8 L743.8 276.7 L750.6 266.9 L757.3 261.7 L764.1 258.8 L770.9 252.7 L777.7 241.4 L784.5 232.7 L791.3 228.4 L798 222.7 L804.8 215.8 L811.6 208.4 L818.4 204 L825.2 205 L832 205.8 L838.7 200.8 L845.5 193 L852.3 189.5 L859.1 186.8 L865.9 184 L872.7 179.1 L879.4 174.5 L886.2 175.7 L893 177.4 L899.8 172.4 L906.6 164.1 L913.4 157.5 L920.1 154.6 L926.9 155.2 L933.7 151.9 L940.5 159.5 L947.3 170.3 L954.1 183.3 L960.8 193.8 L967.6 202.9 L974.4 205.4 L981.2 212.6 L988 207.4 L994.8 202.3 L1001.5 200.2 L1008.3 198.6 L1015.1 195 L1021.9 200.6 L1028.7 204.6 L1035.5 210.5 L1042.2 217.8 L1049 221.2 L1055.8 222.4 L1062.6 234.3 L1069.4 248.2 L1076.2 274.3 L1082.9 304.2 L1089.7 338.2 L1096.5 365.8 L1103.3 396.9 L1110.1 422.1 L1116.9 441.7 L1123.6 448.4 L1130.4 450.8 L1137.2 446.1 L1144 443.2 L1150.8 435.1 L1157.6 423 L1164.3 409.6 L1171.1 394.6 L1177.9 386.2 L1184.7 378.4 L1191.5 370.1 L1198.3 367.6 L1205 372.3 L1211.8 376.7" stroke="#cfcfcf" stroke-width="1.15" fill="none" stroke-linejoin="round" stroke-linecap="round"/><path d="M110.5 752.5H114.5V753.5H110.5Z M409.5 752.5H413.5V753.5H409.5Z M416.5 750.5H420.5V753.5H416.5Z M422.5 748.5H426.5V753.5H422.5Z M545.5 751.5H549.5V753.5H545.5Z M551.5 751.5H555.5V753.5H551.5Z M558.5 750.5H562.5V753.5H558.5Z M565.5 750.5H569.5V753.5H565.5Z M572.5 748.5H576.5V753.5H572.5Z M578.5 747.5H582.5V753.5H578.5Z M585.5 742.5H589.5V753.5H585.5Z M592.5 742.5H596.5V753.5H592.5Z M599.5 741.5H603.5V753.5H599.5Z M606.5 740.5H610.5V753.5H606.5Z M612.5 737.5H616.5V753.5H612.5Z M619.5 735.5H623.5V753.5H619.5Z M626.5 735.5H630.5V753.5H626.5Z M687.5 745.5H691.5V753.5H687.5Z M694.5 742.5H698.5V753.5H694.5Z M701.5 741.5H705.5V753.5H701.5Z M707.5 740.5H711.5V753.5H707.5Z M714.5 739.5H718.5V753.5H714.5Z M734.5 741.5H738.5V753.5H734.5Z M741.5 741.5H745.5V753.5H741.5Z M775.5 748.5H779.5V753.5H775.5Z M782.5 747.5H786.5V753.5H782.5Z M1148.5 750.5H1152.5V753.5H1148.5Z M1155.5 744.5H1159.5V753.5H1155.5Z M1162.5 739.5H1166.5V753.5H1162.5Z M1169.5 736.5H1173.5V753.5H1169.5Z M1189.5 735.5H1193.5V753.5H1189.5Z" stroke="#2aa683" fill="none"/><path d="M2.5 754.5H6.5V759.5H2.5Z M9.5 754.5H13.5V759.5H9.5Z M15.5 754.5H19.5V759.5H15.5Z M22.5 754.5H26.5V759.5H22.5Z M36.5 754.5H40.5V760.5H36.5Z M43.5 754.5H47.5V761.5H43.5Z M77.5 754.5H81.5V758.5H77.5Z M131.5 754.5H135.5V755.5H131.5Z M199.5 754.5H203.5V755.5H199.5Z M205.5 754.5H209.5V758.5H205.5Z M212.5 754.5H216.5V761.5H212.5Z M219.5 754.5H223.5V761.5H219.5Z M226.5 754.5H230.5V762.5H226.5Z M294.5 754.5H298.5V756.5H294.5Z M300.5 754.5H304.5V757.5H300.5Z M307.5 754.5H311.5V759.5H307.5Z M314.5 754.5H318.5V762.5H314.5Z M321.5 754.5H325.5V763.5H321.5Z M327.5 754.5H331.5V764.5H327.5Z M334.5 754.5H338.5V766.5H334.5Z M375.5 754.5H379.5V759.5H375.5Z M456.5 754.5H460.5V759.5H456.5Z M463.5 754.5H467.5V761.5H463.5Z M470.5 754.5H474.5V762.5H470.5Z M816.5 754.5H820.5V756.5H816.5Z M823.5 754.5H827.5V758.5H823.5Z M829.5 754.5H833.5V758.5H829.5Z M857.5 754.5H861.5V757.5H857.5Z M863.5 754.5H867.5V761.5H863.5Z M870.5 754.5H874.5V761.5H870.5Z M884.5 754.5H888.5V761.5H884.5Z M911.5 754.5H915.5V757.5H911.5Z M918.5 754.5H922.5V757.5H918.5Z M924.5 754.5H928.5V761.5H924.5Z M931.5 754.5H935.5V761.5H931.5Z M938.5 754.5H942.5V766.5H938.5Z M945.5 754.5H949.5V769.5H945.5Z M952.5 754.5H956.5V772.5H952.5Z M958.5 754.5H962.5V773.5H958.5Z M999.5 754.5H1003.5V761.5H999.5Z M1006.5 754.5H1010.5V762.5H1006.5Z M1019.5 754.5H1023.5V762.5H1019.5Z M1026.5 754.5H1030.5V763.5H1026.5Z M1040.5 754.5H1044.5V763.5H1040.5Z M1060.5 754.5H1064.5V764.5H1060.5Z M1067.5 754.5H1071.5V769.5H1067.5Z M1074.5 754.5H1078.5V781.5H1074.5Z M1080.5 754.5H1084.5V787.5H1080.5Z M1087.5 754.5H1091.5V793.5H1087.5Z" stroke="#d24342" fill="none"/><path d="M90 753H95V754.6H90Z M97 753H102V754.6H97Z M104 753H109V754.6H104Z M117 753H122V754.6H117Z M144 753H149V754.6H144Z M151 753H156V754.6H151Z M158 753H163V754.6H158Z M165 753H170V754.6H165Z M171 753H176V754.6H171Z M178 753H183V754.6H178Z M185 753H190V754.6H185Z M402 752H407V754H402Z M429 750H434V754H429Z M436 752H441V754H436Z M443 753H448V754.6H443Z M524 753H529V754.6H524Z M531 753H536V754.6H531Z M538 752H543V754H538Z M633 736H638V754H633Z M640 738H645V754H640Z M646 742H651V754H646Z M653 745H658V754H653Z M660 747H665V754H660Z M667 747H672V754H667Z M673 748H678V754H673Z M680 748H685V754H680Z M721 740H726V754H721Z M728 742H733V754H728Z M748 742H753V754H748Z M755 744H760V754H755Z M762 748H767V754H762Z M768 750H773V754H768Z M789 748H794V754H789Z M796 750H801V754H796Z M802 751H807V754H802Z M809 753H814V754.6H809Z M843 753H848V754.6H843Z M1175 736H1180V754H1175Z M1182 737H1187V754H1182Z M1196 735H1201V754H1196Z M1203 739H1208V754H1203Z M1209 742H1214V754H1209Z" fill="#2aa683"/><path d="M29 754H34V760H29Z M49 754H54V761H49Z M56 754H61V761H56Z M63 754H68V760H63Z M70 754H75V759H70Z M83 754H88V757H83Z M124 753.5H129V755.1H124Z M138 754H143V756H138Z M192 753.5H197V755.1H192Z M233 754H238V762H233Z M239 754H244V761H239Z M246 754H251V760H246Z M253 754H258V760H253Z M260 754H265V759H260Z M266 754H271V758H266Z M273 754H278V758H273Z M280 754H285V757H280Z M287 754H292V757H287Z M341 754H346V766H341Z M348 754H353V764H348Z M355 754H360V762H355Z M361 754H366V760H361Z M368 754H373V759H368Z M382 754H387V759H382Z M389 754H394V758H389Z M395 754H400V757H395Z M450 753.5H455V755.1H450Z M477 754H482V763H477Z M484 754H489V763H484Z M490 754H495V762H490Z M497 754H502V761H497Z M504 754H509V758H504Z M511 754H516V756H511Z M517 753.5H522V755.1H517Z M836 754H841V758H836Z M850 754H855V756H850Z M877 754H882V761H877Z M891 754H896V761H891Z M897 754H902V759H897Z M904 754H909V757H904Z M965 754H970V773H965Z M972 754H977V769H972Z M979 754H984V768H979Z M985 754H990V764H985Z M992 754H997V762H992Z M1013 754H1018V761H1013Z M1033 754H1038V763H1033Z M1047 754H1052V763H1047Z M1053 754H1058V762H1053Z M1094 754H1099V791H1094Z M1101 754H1106V788H1101Z M1108 754H1113V786H1108Z M1114 754H1119V783H1114Z M1121 754H1126V779H1121Z M1128 754H1133V773H1128Z M1135 754H1140V767H1135Z M1141 754H1146V759H1141Z" fill="#d24342"/><path d="M0 742.5 L6.8 743.6 L13.6 744.6 L20.3 745.6 L27.1 746.5 L33.9 747.5 L40.7 748.4 L47.5 749.1 L54.3 749.4 L61 749.7 L67.8 749.9 L74.6 750 L81.4 749.8 L88.2 749.3 L95 748.8 L101.7 748.2 L108.5 747.6 L115.3 747.5 L122.1 747.9 L128.9 748.3 L135.7 748.5 L142.4 748.2 L149.2 747.8 L156 747.4 L162.8 747.1 L169.6 746.8 L176.4 746.8 L183.1 746.9 L189.9 747.2 L196.7 747.7 L203.5 749.4 L210.3 751.5 L217.1 753 L223.8 754.1 L230.6 754.6 L237.4 754.9 L244.2 755.1 L251 755.3 L257.8 755.4 L264.5 755.5 L271.3 755.7 L278.1 755.8 L284.9 756 L291.7 756.3 L298.5 756.6 L305.2 757.5 L312 759.2 L318.8 761.4 L325.6 763.8 L332.4 765.7 L339.2 767.2 L345.9 768.6 L352.7 768.9 L359.5 768.4 L366.3 768.3 L373.1 768.8 L379.9 769.2 L386.6 769.2 L393.4 769 L400.2 768.5 L407 766.5 L413.8 764.9 L420.6 763.9 L427.3 763.3 L434.1 763.3 L440.9 763.6 L447.7 764.4 L454.5 765.9 L461.3 768.2 L468 770 L474.8 771.6 L481.6 772.8 L488.4 773.7 L495.2 774.4 L502 774.3 L508.7 773.5 L515.5 772.7 L522.3 771.6 L529.1 770.9 L535.9 770.5 L542.7 770 L549.4 769.5 L556.2 768.8 L563 768 L569.8 766.7 L576.6 764.9 L583.4 762.4 L590.1 759.1 L596.9 756.8 L603.7 755.1 L610.5 752.6 L617.3 749 L624.1 747.9 L630.8 744.9 L637.6 742.4 L644.4 742 L651.2 742.3 L658 742.4 L664.8 741.4 L671.5 741 L678.3 740.7 L685.1 739.6 L691.9 736.7 L698.7 734.2 L705.5 732.2 L712.2 729.8 L719 727.4 L725.8 726.6 L732.6 726 L739.4 723.5 L746.2 721.7 L752.9 721.4 L759.7 721.3 L766.5 721.4 L773.3 721.7 L780.1 720.8 L786.9 719.3 L793.6 719.3 L800.4 719.5 L807.2 720.1 L814 721.5 L820.8 723.6 L827.6 724.9 L834.3 725.5 L841.1 724.3 L847.9 723.8 L854.7 724.8 L861.5 726.1 L868.3 727.5 L875 728.7 L881.8 729.8 L888.6 730 L895.4 730 L902.2 730 L909 729.3 L915.7 729.6 L922.5 731 L929.3 733.1 L936.1 735.8 L942.9 739.1 L949.7 742.2 L956.4 745.6 L963.2 748.6 L970 750.2 L976.8 751.3 L983.6 751.3 L990.4 749.8 L997.1 749.5 L1003.9 751.2 L1010.7 752.7 L1017.5 754 L1024.3 755 L1031.1 755.7 L1037.8 756.1 L1044.6 756.4 L1051.4 756.8 L1058.2 757.9 L1065 762 L1071.8 770.8 L1078.5 778.9 L1085.3 786.7 L1092.1 792.4 L1098.9 795 L1105.7 797.3 L1112.5 799.3 L1119.2 801.3 L1126 801.6 L1132.8 800.4 L1139.6 798.2 L1146.4 793.9 L1153.2 789.2 L1159.9 784.2 L1166.7 779.9 L1173.5 777.2 L1180.3 775.7 L1187.1 773.6 L1193.9 770.2 L1200.6 769.2 L1207.4 769.2 L1211.5 769.2" stroke="#cfcfcf" stroke-width="1.0" fill="none" stroke-linejoin="round" stroke-linecap="round"/><path d="M0 741.2 L6.8 741.7 L13.6 742.2 L20.3 742.8 L27.1 743.5 L33.9 744.4 L40.7 745.5 L47.5 746.5 L54.3 747.2 L61 747.9 L67.8 748.5 L74.6 748.7 L81.4 748.7 L88.2 748.5 L95 748.3 L101.7 748.2 L108.5 748.2 L115.3 748.2 L122.1 748.3 L128.9 748.5 L135.7 748.7 L142.4 748.7 L149.2 748.4 L156 748 L162.8 747.6 L169.6 747.4 L176.4 747.2 L183.1 747.1 L189.9 747 L196.7 747.2 L203.5 747.8 L210.3 748.5 L217.1 749.3 L223.8 750.2 L230.6 751.1 L237.4 752 L244.2 752.7 L251 753.4 L257.8 754 L264.5 754.3 L271.3 754.6 L278.1 754.9 L284.9 755 L291.7 755 L298.5 755 L305.2 755 L312 755 L318.8 756.3 L325.6 758.8 L332.4 760.6 L339.2 762.3 L345.9 763.8 L352.7 764.7 L359.5 765.2 L366.3 765.8 L373.1 766.6 L379.9 767.3 L386.6 767.7 L393.4 768.1 L400.2 768.2 L407 767.1 L413.8 766.2 L420.6 765.8 L427.3 765.6 L434.1 765.4 L440.9 765.2 L447.7 765 L454.5 765 L461.3 765.9 L468 767 L474.8 767.8 L481.6 768.6 L488.4 769.7 L495.2 770.9 L502 771.5 L508.7 771.9 L515.5 772 L522.3 771.6 L529.1 771.2 L535.9 770.9 L542.7 770.5 L549.4 770.1 L556.2 769.7 L563 769.2 L569.8 768.6 L576.6 767.7 L583.4 766.7 L590.1 765.6 L596.9 764.2 L603.7 762.5 L610.5 760.4 L617.3 757.8 L624.1 755.6 L630.8 752.9 L637.6 749.8 L644.4 748 L651.2 746.9 L658 746 L664.8 745.2 L671.5 744.4 L678.3 743.4 L685.1 742.2 L691.9 740.9 L698.7 739.4 L705.5 737.8 L712.2 736 L719 734.3 L725.8 732.5 L732.6 730.8 L739.4 729.3 L746.2 727.9 L752.9 726.7 L759.7 725.7 L766.5 724.9 L773.3 724.4 L780.1 723.8 L786.9 722.9 L793.6 722 L800.4 721.4 L807.2 721.3 L814 721.4 L820.8 721.7 L827.6 722.2 L834.3 722.7 L841.1 723.1 L847.9 723.3 L854.7 723.5 L861.5 723.8 L868.3 724.9 L875 726.1 L881.8 726.8 L888.6 727.3 L895.4 727.8 L902.2 728.2 L909 728.6 L915.7 729.2 L922.5 729.9 L929.3 730.7 L936.1 731.6 L942.9 732.8 L949.7 734.8 L956.4 737.3 L963.2 739.7 L970 741.7 L976.8 743.4 L983.6 744.7 L990.4 745.9 L997.1 746.9 L1003.9 747.8 L1010.7 748.9 L1017.5 750 L1024.3 751.1 L1031.1 752.1 L1037.8 752.9 L1044.6 753.7 L1051.4 754.6 L1058.2 755.7 L1065 757.2 L1071.8 759.7 L1078.5 763.6 L1085.3 767.3 L1092.1 771.4 L1098.9 775.9 L1105.7 780.1 L1112.5 784 L1119.2 787.1 L1126 789.5 L1132.8 792.2 L1139.6 793.5 L1146.4 793.5 L1153.2 793.3 L1159.9 792.2 L1166.7 789.9 L1173.5 787.6 L1180.3 785.4 L1187.1 782.9 L1193.9 780 L1200.6 777.7 L1207.4 776 L1211.5 775.2" stroke="#e6d92c" stroke-width="1.0" fill="none" stroke-linejoin="round" stroke-linecap="round"/><path d="M865.5 65V698M865.5 698V806M-6 595.5H1252" stroke="#787c88" stroke-width="1" stroke-dasharray="5 5" fill="none"/><path d="M896.5 113.5H903.5M900.7 110.7L903.5 113.5L900.7 116.3" stroke="#f0f0f0" stroke-width="1.2" fill="none"/><path d="M1065.5 666H1072.500M1069.7 663.2L1072.5 666L1069.7 668.8" stroke="#f0f0f0" stroke-width="1.2" fill="none"/></svg>
<div class="bar" style="top:0;height:30px"></div><div class="bar" style="top:30px;height:1px;background:#020203"></div>
<div class="bar" style="top:31px;height:32px"></div><div class="bar" style="top:63px;height:1px;background:#020203"></div>
<div class="bar" style="top:0;left:261px;width:32px;height:30px;background:#101c2c"></div>
<div class="t top" style="left:-10.3px;font-weight:500">分窗</div>
<div class="t top" style="left:49px;font-weight:500;font-size:14px;top:6.5px;">复盘</div>
<div class="t top" style="left:137px;">周期</div>
<div class="t top" style="left:195px;">15分</div>
<div class="t top" style="left:235px;">1时</div>
<div class="t top" style="left:266px;color:#1a76f8;">4时</div>
<div class="t top" style="left:299px;">8时</div>
<div class="t top" style="left:332px;">1日</div>
<div class="t top" style="left:364px;">1秒</div>
<div class="t top" style="left:396px;">30秒</div>
<div class="t top" style="left:436px;">分时</div>
<div class="t top" style="left:475px;">1分</div>
<div class="t top" style="left:506px;">5分</div>
<div class="t top" style="left:539px;">10分</div>
<div class="t top" style="left:579px;">30分</div>
<div class="t top" style="left:619px;">2时</div>
<div class="t top" style="left:652px;">3时</div>
<div class="t top" style="left:684.5px;">12时</div>
<div class="t top" style="left:723.5px;">2日</div>
<div class="t top" style="left:756px;">3日</div>
<div class="t top" style="left:788.5px;">周K</div>
<div class="t top" style="left:822.5px;">15日</div>
<div class="t top" style="left:862px;">月K</div>
<div class="t top" style="left:896px;">季K</div>
<div class="t top" style="left:929.5px;">年K</div>
<div class="t top" style="left:1230px">0s</div>
<svg style="position:absolute;left:0;top:0" width="1252" height="64" viewBox="0 0 1252 64" fill="none" stroke="#c8cbd2" stroke-width="1.3" stroke-linecap="round" stroke-linejoin="round">
<path d="M37.8 9.8L32.3 14.8L37.8 19.8ZM44 9.8L38.500 14.8L44 19.8Z" stroke-width="1.1"/>
<path d="M93.800 10.3V12M93.800 18.600V20.500M98.400 9V10.500M98.400 20.500V22M103 10.300V12M103 18.600V20.500" stroke-width="1.1"/>
<rect x="92.400" y="12.200" width="2.800" height="6.400" rx="1.200" stroke-width="1.1"/><rect x="97" y="10.700" width="2.800" height="9.700" rx="1.200" stroke-width="1.100"/><rect x="101.600" y="12.200" width="2.800" height="6.400" rx="1.200" stroke-width="1.100"/>
<path d="M113.700 13L117.600 16.800L121.400 13M170 13L173.800 16.800L177.600 13" stroke-width="1.2"/>
<!-- toolbar 2 -->
<g stroke="#b9bcc3">
<path d="M8 53L22 41M18 40.400H22.600V45M6.300 51.300L9.800 54.800" stroke-width="1.200"/>
<circle cx="42.200" cy="47.100" r="1.300" fill="#b9bcc3" stroke="none"/><circle cx="46.600" cy="47.100" r="1.300" fill="#b9bcc3" stroke="none"/><circle cx="51.100" cy="47.100" r="1.300" fill="#b9bcc3" stroke="none"/>
<circle cx="59.800" cy="41.200" r="3.100" fill="#f4562a" stroke="none"/>
<path d="M70 41V53M244.500 41.500V53" stroke="#1d2a3d" stroke-width="1"/>
<g stroke="#8e9198" stroke-width="1.200">
<path d="M182 50V43Q182 40 185 40H192.500M191 38.600L192.800 40L191 41.400M195.500 44V51Q195.500 54 192.500 54H185.500M187 52.600L185.200 54L187 55.400"/>
<path d="M185.800 50.200L186.300 47.700L191.200 43.300L193.200 45.300L188.300 49.700ZM189.500 50.500H192.300" stroke-width="1.100"/>
<path d="M215 52.500L227.300 40M213.800 50.300L218 54.400"/>
<path d="M221.800 50.800L225 48V49.600H226.800V48L230 50.800L226.800 53.600V52H225V53.600Z" fill="#8e9198" stroke="none"/>
</g>
<path d="M260.800 47.500V41.400Q260.800 39.900 262.300 39.900H268.500" stroke="#1f8bf0" stroke-width="1.600"/><path d="M265.600 43H274.800V54L270.200 50.800L265.600 54Z" stroke="#1f8bf0" stroke-width="1.600"/>
<path d="M291.200 50.900L303.600 38.400L308.800 43.800L296.600 55.600ZM294.900 47.150L296.700 48.900M297.400 44.650L299.200 46.400M299.900 42.150L301.700 43.900"/>
<path d="M324.500 53L325.500 48.600L334 40.200Q336.500 38.300 338.500 40.200Q340.300 42.200 338.500 44.500L330 53ZM332.300 41.900L336.800 46.300M333.500 52.200Q335 49.500 336.500 51.500T340 51"/>
<path d="M358.200 40.300V42.500M358.200 51.200V53.700M364 40.300V43.800M364 51.800V53.700M369.800 40.300V42.300M369.800 51.200V53.700" stroke-width="1.100"/>
<rect x="356.400" y="42.500" width="3.600" height="8.700" rx="1.300" stroke-width="1.300"/><rect x="362.200" y="43.800" width="3.600" height="8" rx="1.300" stroke-width="1.300"/><rect x="368" y="42.300" width="3.600" height="8.900" rx="1.300" stroke-width="1.300"/>
<rect x="388.700" y="43.900" width="15" height="10.500" rx="1.500"/><path d="M392.500 43.800V41.500Q392.500 38.400 396 38.400Q399 38.400 399.800 41"/><circle cx="396.100" cy="48.800" r="0.900" fill="#b9bcc3" stroke="none"/>
<path d="M432.700 46V42.200Q432.700 40.700 431.200 40.700H421.700Q420.200 40.700 420.200 42.200V52Q420.200 53.500 421.700 53.500H426.500M423 44.500H430.500M423 47.600H428" stroke-width="1.200"/>
<path d="M427.800 53.300L428.300 51L432.600 47Q433.800 46.200 434.600 47.200Q435.300 48.200 434.400 49.200L430.200 53.200ZM432 53.300H435" stroke-width="1.100"/>
<g transform="translate(460.900 46.200) rotate(-40.500)"><path d="M-5.500 -6.800H0.500A6.800 6.800 0 0 1 0.500 6.800H-5.500V2.500H0.500A2.500 2.500 0 0 0 0.500 -2.500H-5.500ZM-2.600 -6.800V-2.500M-2.600 2.500V6.800" stroke-width="1.200"/></g>
<path d="M484.800 40H499.600L493.100 47.300V54.600L491.500 53.300V47.300ZM485.800 40.900H498.600" stroke-width="1.300"/>
<path d="M516.700 41.400H531M520.500 41.400V39.300Q520.500 38.500 521.300 38.500H526.300Q527 38.500 527 39.300V41.400M518.300 41.400V53Q518.300 54.500 519.800 54.500H528.500Q530 54.500 530 53V41.400"/><path d="M522.200 44.500V50M525.900 44.500V50" stroke-width="1.700" stroke-linecap="butt"/>
<path d="M552 42.600L548.600 46.300L552 50M548.600 46.300H555Q560 46.800 560.200 52.400" stroke="#3a3d44"/>
<path d="M589.500 42.600L592.900 46.300L589.500 50M592.900 46.300H586.500Q581.200 46.800 580.800 52.400" stroke="#3a3d44"/>
</g></svg>
<div class="t" style="left:85px;top:39.5px;font-size:16px;color:#d4a224">主</div>
<div class="t" style="left:116.5px;top:39.5px;font-size:16px;color:#d4a224">大</div>
<div class="t" style="left:148px;top:39.5px;font-size:16px;color:#d4a224">筹</div>
<div class="t lg" style="left:0px">06 00:00</div>
<div class="t lg" style="left:52.5px">开</div>
<div class="t lg" style="left:67.5px"><b>122752.9</b></div>
<div class="t lg" style="left:123.5px">高</div>
<div class="t lg" style="left:139px"><b>123422.0</b></div>
<div class="t lg" style="left:195px">低</div>
<div class="t lg" style="left:210px"><b>122160.0</b></div>
<div class="t lg" style="left:266.5px">收</div>
<div class="t lg" style="left:281px"><b>122550.4</b></div>
<div class="t lg" style="left:337.5px">涨幅</div>
<div class="t lg" style="left:364px"><b>-0.17%(-202.6)</b></div>
<div class="t lg" style="left:446.5px">振幅</div>
<div class="t lg" style="left:474px"><b>1.03%</b></div>
<div class="t ma" style="left:0px;color:#f0e22e;font-weight:bold;">MA(14):122612.5</div>
<div class="t ma" style="left:100px;color:#d843bb;">MA(30):120210.8</div>
<div class="t ma" style="left:199px;color:#2a98d0;">MA(60):115567.6</div>
<div class="t ma" style="left:298.5px;color:#a8d884;">MA(90):114757.5</div>
<div class="t ma" style="left:397.5px;color:#f29490;">MA(120):115128.4</div>
<div class="t ma" style="left:503.5px;color:#0cd2d4;">MA(200):114200.8</div>
<div class="t ma" style="left:610px;color:#f07a0a;">MA(360):114412.5</div>
<div class="t" style="left:0.5px;top:702px;font-size:12px;color:#c8cbd2">43.4</div>
<div class="t" style="left:30px;top:702px;font-size:12px;color:#f0e22e;font-weight:bold;letter-spacing:-0.35px">DEA:1951.9</div>
<div class="t" style="left:99px;top:702px;font-size:12px;color:#d64545;letter-spacing:-0.3px">MACD:-417.0</div>
<div class="t" style="left:842px;top:106px;font-size:12px;color:#f2f2f2;-webkit-text-stroke:0.3px #f2f2f2">126208.5</div>
<div class="t" style="left:1011px;top:659px;font-size:12px;color:#f2f2f2;-webkit-text-stroke:0.3px #f2f2f2">101516.5</div>
<div class="t ax" style="left:10.5px">9月 15</div>
<div class="t ax" style="left:91.5px">9月 17</div>
<div class="t ax" style="left:173.5px">9月 19</div>
<div class="t ax" style="left:254.5px">9月 21</div>
<div class="t ax" style="left:336.5px">9月 23</div>
<div class="t ax" style="left:417.5px">9月 25</div>
<div class="t ax" style="left:498.5px">9月 27</div>
<div class="t ax" style="left:580.5px">9月 29</div>
<div class="t ax" style="left:661.5px">10月 1</div>
<div class="t ax" style="left:743.5px">10月 3</div>
<div class="t ax" style="left:824.5px">10月 5</div>
<div class="t ax" style="left:906.5px">10月 7</div>
<div class="t ax" style="left:987.5px">10月 9</div>
<div class="t ax" style="left:1068.5px">10月 11</div>
<div class="t ax" style="left:1150.5px">10月 13</div>
<div class="t ax" style="left:1231.5px">10月 15</div>
<div class="t" style="left:813px;top:808px;width:105px;height:18px;background:#5a6478;color:#d9dce2;font-size:12px;-webkit-text-stroke:0.35px #d9dce2;line-height:18.5px;text-align:center;letter-spacing:-0.15px">2025-10-06 00:00</div>
</body></html>
